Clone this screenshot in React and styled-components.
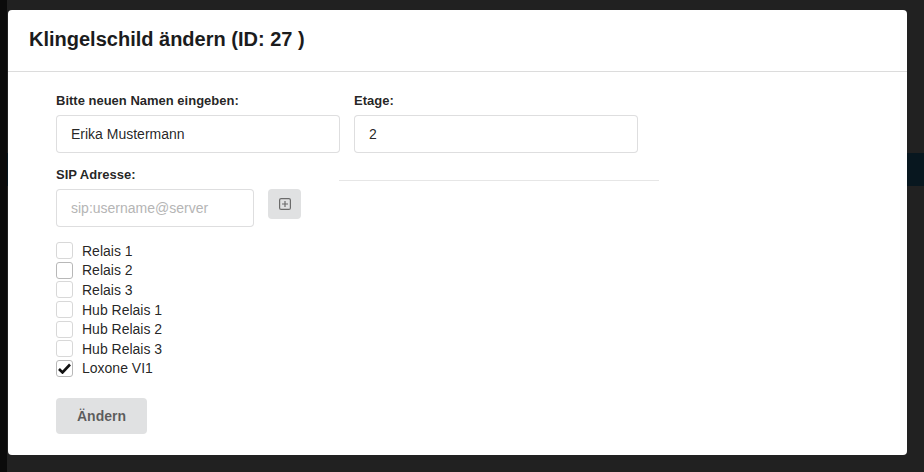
import styled, { createGlobalStyle } from 'styled-components';

const GlobalStyle = createGlobalStyle`
    html, body {
        margin: 0;
        padding: 0;
        background: #212121;
    }
    * {
        box-sizing: border-box;
    }
`;

const Page = styled.div`
    position: relative;
    width: 924px;
    height: 472px;
    overflow: hidden;
    background: #212121;
    border-left: 7px solid #0b0b0b;
    font-family: 'Liberation Sans', Arial, sans-serif;
`;

const BackBand = styled.div`
    margin-top: 153px;
    height: 33px;
    background: #08171f;
`;

const Overlay = styled.div`
    position: absolute;
    inset: 0;
    padding: 10px 17px 17px 1px;
`;

const Modal = styled.div`
    height: 100%;
    background: #fff;
    border-radius: 4px;
    display: flex;
    flex-direction: column;
`;

const Header = styled.div`
    padding: 17px 21px 20px;
    border-bottom: 1px solid #dcdcdc;
`;

const Title = styled.h2`
    margin: 0;
    font-size: 20px;
    font-weight: 700;
    color: #1b1c1d;
    line-height: 24px;
`;

const Content = styled.div`
    padding: 22px 48px;
`;

const Row = styled.div`
    display: flex;
    gap: 14px;
`;

const Field = styled.div`
    display: flex;
    flex-direction: column;
    width: ${(p) => p.width}px;
`;

const Label = styled.label`
    font-size: 13px;
    font-weight: 700;
    color: rgba(0, 0, 0, 0.87);
    margin-bottom: 7px;
    line-height: 14px;
`;

const Input = styled.input`
    height: 38px;
    width: 100%;
    border: 1px solid rgba(34, 36, 38, 0.15);
    border-radius: 4px;
    padding: 0 14px;
    font-family: inherit;
    font-size: 14px;
    color: rgba(0, 0, 0, 0.87);
    outline: none;

    &::placeholder {
        color: #b5b5b5;
    }
`;

const SipRow = styled.div`
    display: flex;
    margin-top: 15px;
`;

const Divider = styled.div`
    width: 320px;
    height: 1px;
    background: #e6e6e6;
    margin-top: 12px;
`;

const SipInputRow = styled.div`
    display: flex;
    align-items: flex-start;
    gap: 14px;
`;

const IconButton = styled.button`
    width: 33px;
    height: 30px;
    border: none;
    border-radius: 4px;
    background: #e0e1e2;
    display: flex;
    align-items: center;
    justify-content: center;
    padding: 0;
    color: #6b6b6b;
`;

const CheckList = styled.div`
    display: flex;
    flex-direction: column;
    margin-top: 14px;
`;

const CheckRow = styled.label`
    display: flex;
    align-items: center;
    gap: 9px;
    height: 19.6px;
    font-size: 14px;
    color: rgba(0, 0, 0, 0.87);
`;

const Box = styled.span`
    width: 17px;
    height: 17px;
    border: 1px solid ${(p) => (p.strong ? '#b8b8b8' : '#d8d8d8')};
    border-radius: 3px;
    display: flex;
    align-items: center;
    justify-content: center;
    background: #fff;
`;

const SubmitButton = styled.button`
    margin-top: 20px;
    width: 91px;
    height: 36px;
    border: none;
    border-radius: 4px;
    background: #e0e1e2;
    color: rgba(0, 0, 0, 0.6);
    font-family: inherit;
    font-size: 14px;
    font-weight: 700;
`;

const relais = [
    { name: 'Relais 1' },
    { name: 'Relais 2', strong: true },
    { name: 'Relais 3' },
    { name: 'Hub Relais 1' },
    { name: 'Hub Relais 2' },
    { name: 'Hub Relais 3' },
    { name: 'Loxone VI1', checked: true, strong: true },
];

const PlusIcon = () => (
    <svg width="12" height="12" viewBox="0 0 12 12" fill="none" stroke="currentColor" strokeWidth="1.2">
        <rect x="0.6" y="0.6" width="10.8" height="10.8" rx="1.5" />
        <path d="M6 3v6M3 6h6" />
    </svg>
);

const Check = () => (
    <svg width="13" height="11" viewBox="0 0 13 11">
        <path d="M1 6l3.5 3.5L12 1.5" fill="none" stroke="#111" strokeWidth="2.6" />
    </svg>
);

const App = () => {
    return (
        <>
            <GlobalStyle />
            <Page>
                <BackBand />
                <Overlay>
                    <Modal>
                        <Header>
                            <Title>Klingelschild ändern (ID: 27 )</Title>
                        </Header>
                        <Content>
                            <Row>
                                <Field width={284}>
                                    <Label>Bitte neuen Namen eingeben:</Label>
                                    <Input defaultValue="Erika Mustermann" />
                                </Field>
                                <Field width={284}>
                                    <Label>Etage:</Label>
                                    <Input defaultValue="2" />
                                </Field>
                            </Row>
                            <SipRow>
                                <Field width={283}>
                                    <Label>SIP Adresse:</Label>
                                    <SipInputRow>
                                        <Field width={198}>
                                            <Input placeholder="sip:username@server" />
                                        </Field>
                                        <IconButton>
                                            <PlusIcon />
                                        </IconButton>
                                    </SipInputRow>
                                </Field>
                                <Divider />
                            </SipRow>
                            <CheckList>
                                {relais.map((r) => (
                                    <CheckRow key={r.name}>
                                        <Box strong={r.strong}>{r.checked && <Check />}</Box>
                                        {r.name}
                                    </CheckRow>
                                ))}
                            </CheckList>
                            <SubmitButton>Ändern</SubmitButton>
                        </Content>
                    </Modal>
                </Overlay>
            </Page>
        </>
    );
};

export default App;
